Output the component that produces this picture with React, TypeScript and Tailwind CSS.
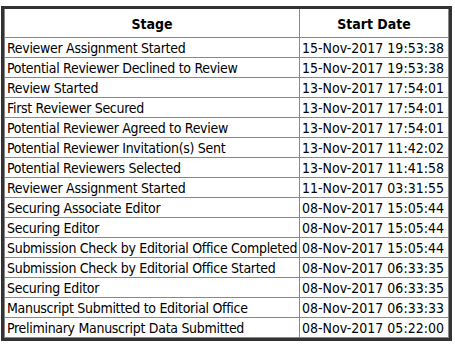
const rows: [string, string][] = [
  ["Reviewer Assignment Started", "15-Nov-2017 19:53:38"],
  ["Potential Reviewer Declined to Review", "15-Nov-2017 19:53:38"],
  ["Review Started", "13-Nov-2017 17:54:01"],
  ["First Reviewer Secured", "13-Nov-2017 17:54:01"],
  ["Potential Reviewer Agreed to Review", "13-Nov-2017 17:54:01"],
  ["Potential Reviewer Invitation(s) Sent", "13-Nov-2017 11:42:02"],
  ["Potential Reviewers Selected", "13-Nov-2017 11:41:58"],
  ["Reviewer Assignment Started", "11-Nov-2017 03:31:55"],
  ["Securing Associate Editor", "08-Nov-2017 15:05:44"],
  ["Securing Editor", "08-Nov-2017 15:05:44"],
  ["Submission Check by Editorial Office Completed", "08-Nov-2017 15:05:44"],
  ["Submission Check by Editorial Office Started", "08-Nov-2017 06:33:35"],
  ["Securing Editor", "08-Nov-2017 06:33:35"],
  ["Manuscript Submitted to Editorial Office", "08-Nov-2017 06:33:33"],
  ["Preliminary Manuscript Data Submitted", "08-Nov-2017 05:22:00"],
];

export default function App() {
  return (
    <div className="w-[455px] h-[346px] bg-white overflow-hidden pt-[6px] pl-px font-['DejaVu_Sans_Condensed','Liberation_Sans',sans-serif] text-[14px] leading-none text-black">
      <div className="w-[451px] border-[3px] border-[#333333]">
        <div className="border-x border-b border-[#888888]">
          <div className="flex h-[29px] border-b border-[#888888] font-bold">
            <div className="w-[295px] border-r border-[#888888] flex items-center justify-center pt-[2px]">Stage</div>
            <div className="flex-1 flex items-center justify-center pt-[2px]">Start Date</div>
          </div>
          {rows.map(([stage, date], i) => (
            <div
              key={i}
              className={i < rows.length - 1 ? "flex h-[20px] border-b border-[#888888]" : "flex h-[19px]"}
            >
              <div className="w-[295px] border-r border-[#888888] pl-[2px] pt-px flex items-center whitespace-nowrap overflow-hidden tracking-[-0.3px]">{stage}</div>
              <div className="flex-1 pl-[2px] pt-px flex items-center whitespace-nowrap">{date}</div>
            </div>
          ))}
        </div>
      </div>
    </div>
  );
}
